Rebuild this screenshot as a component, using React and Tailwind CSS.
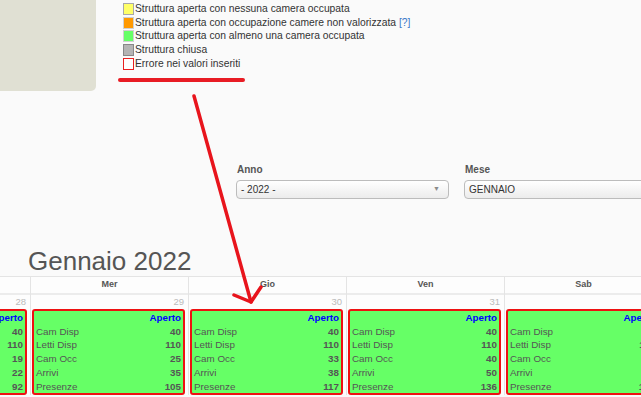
import React from 'react';

const legend = [
  { color: 'bg-[#ffff66] border-[#a8a8a8]', text: 'Struttura aperta con nessuna camera occupata' },
  { color: 'bg-[#ff9900] border-[#d0d0d0]', text: 'Struttura aperta con occupazione camere non valorizzata', help: true },
  { color: 'bg-[#66ff66] border-[#d0d0d0]', text: 'Struttura aperta con almeno una camera occupata' },
  { color: 'bg-[#b4b4b4] border-[#888888]', text: 'Struttura chiusa' },
  { color: 'bg-white border-[#e82020]', text: 'Errore nei valori inseriti' },
];

const days = [
  { name: 'Mar', num: '28', vals: [40, 110, 19, 22, 92] },
  { name: 'Mer', num: '29', vals: [40, 110, 25, 35, 105] },
  { name: 'Gio', num: '30', vals: [40, 110, 33, 38, 117] },
  { name: 'Ven', num: '31', vals: [40, 110, 40, 50, 136] },
  { name: 'Sab', num: '', vals: [40, 110, 28, 14, 121] },
];

const labels = ['Cam Disp', 'Letti Disp', 'Cam Occ', 'Arrivi', 'Presenze'];

function Select({ label, value, caret, wide }) {
  return (
    <div className={wide ? 'w-[240px] shrink-0' : 'w-[213px] shrink-0'}>
      <div className="text-[10px] font-bold leading-[12px] text-[#555] pl-[1px]">{label}</div>
      <div className="mt-[4px] h-[19px] flex items-center justify-between rounded-[4px] border border-[#bcbcbc] bg-gradient-to-b from-white to-[#ececec] pl-[4px] pr-[8px]">
        <span className="text-[10px] text-[#333]">{value}</span>
        {caret && <span className="text-[7px] text-[#8a8a8a]">▼</span>}
      </div>
    </div>
  );
}

function DayColumn({ day }) {
  return (
    <div className="w-[158px] shrink-0 border-l border-[#e4e4e4] flex flex-col">
      <div className="h-[16px] flex items-center justify-center text-[9px] font-bold text-[#555]">{day.name}</div>
      <div className="h-[16px] border-t-2 border-[#ececec] flex items-center justify-end pr-[4px] text-[9.5px] text-[#bbb]">{day.num}</div>
      <div className="ml-[1px] mr-[3px] h-[86px] rounded-[3px] border-2 border-[#ee1111] bg-[#66ff66] px-[2px] text-[9.8px] leading-[13.7px]">
        <div className="text-right font-bold text-[#0000ff]">Aperto</div>
        {labels.map((l, i) => (
          <div key={l} className="flex justify-between text-[#555]">
            <span>{l}</span>
            <span className="font-bold">{day.vals[i]}</span>
          </div>
        ))}
      </div>
    </div>
  );
}

export default function App() {
  return (
    <div className="relative w-[641px] h-[397px] overflow-hidden bg-[#fafafa] font-['Liberation_Sans',Arial,sans-serif]">
      {/* legenda */}
      <div className="flex">
        <div className="w-[96px] h-[91px] shrink-0 bg-[#e0e0d3] rounded-br-[5px]" />
        <div className="ml-[22px] pt-[2px]">
          {legend.map((item) => (
            <div key={item.text} className="flex items-center h-[13.75px] pl-[5px]">
              <span className={`w-[11px] h-[12px] border ${item.color}`} />
              <span className="ml-[1px] text-[10.3px] leading-[12px] text-[#333] whitespace-nowrap">
                {item.text}
                {item.help && <span className="text-[#3a78c8]"> [?]</span>}
              </span>
            </div>
          ))}
          <div className="mt-[7px] w-[127px] h-[4px] rounded-full bg-[#e81c24]" />
        </div>
      </div>

      {/* filtri */}
      <div className="mt-[73px] ml-[236px] flex gap-[15px]">
        <Select label="Anno" value="- 2022 -" caret />
        <Select label="Mese" value="GENNAIO" wide />
      </div>

      {/* calendario */}
      <div className="mt-[47px] pl-[28px] text-[26px] leading-[30px] text-[#555]">Gennaio 2022</div>
      <div className="border-t border-[#e4e4e4] bg-[#fdfdfd]">
        <div className="flex ml-[-128px]">
          {days.map((d) => (
            <DayColumn key={d.name} day={d} />
          ))}
        </div>
      </div>

      {/* freccia */}
      <svg className="absolute left-0 top-0 pointer-events-none" width="641" height="397">
        <g stroke="#e8141c" strokeWidth="3.5" strokeLinecap="round" strokeLinejoin="round" fill="none">
          <line x1="194" y1="96" x2="251" y2="302" />
          <polyline points="234,295 251,302 261,287" />
        </g>
      </svg>
    </div>
  );
}
